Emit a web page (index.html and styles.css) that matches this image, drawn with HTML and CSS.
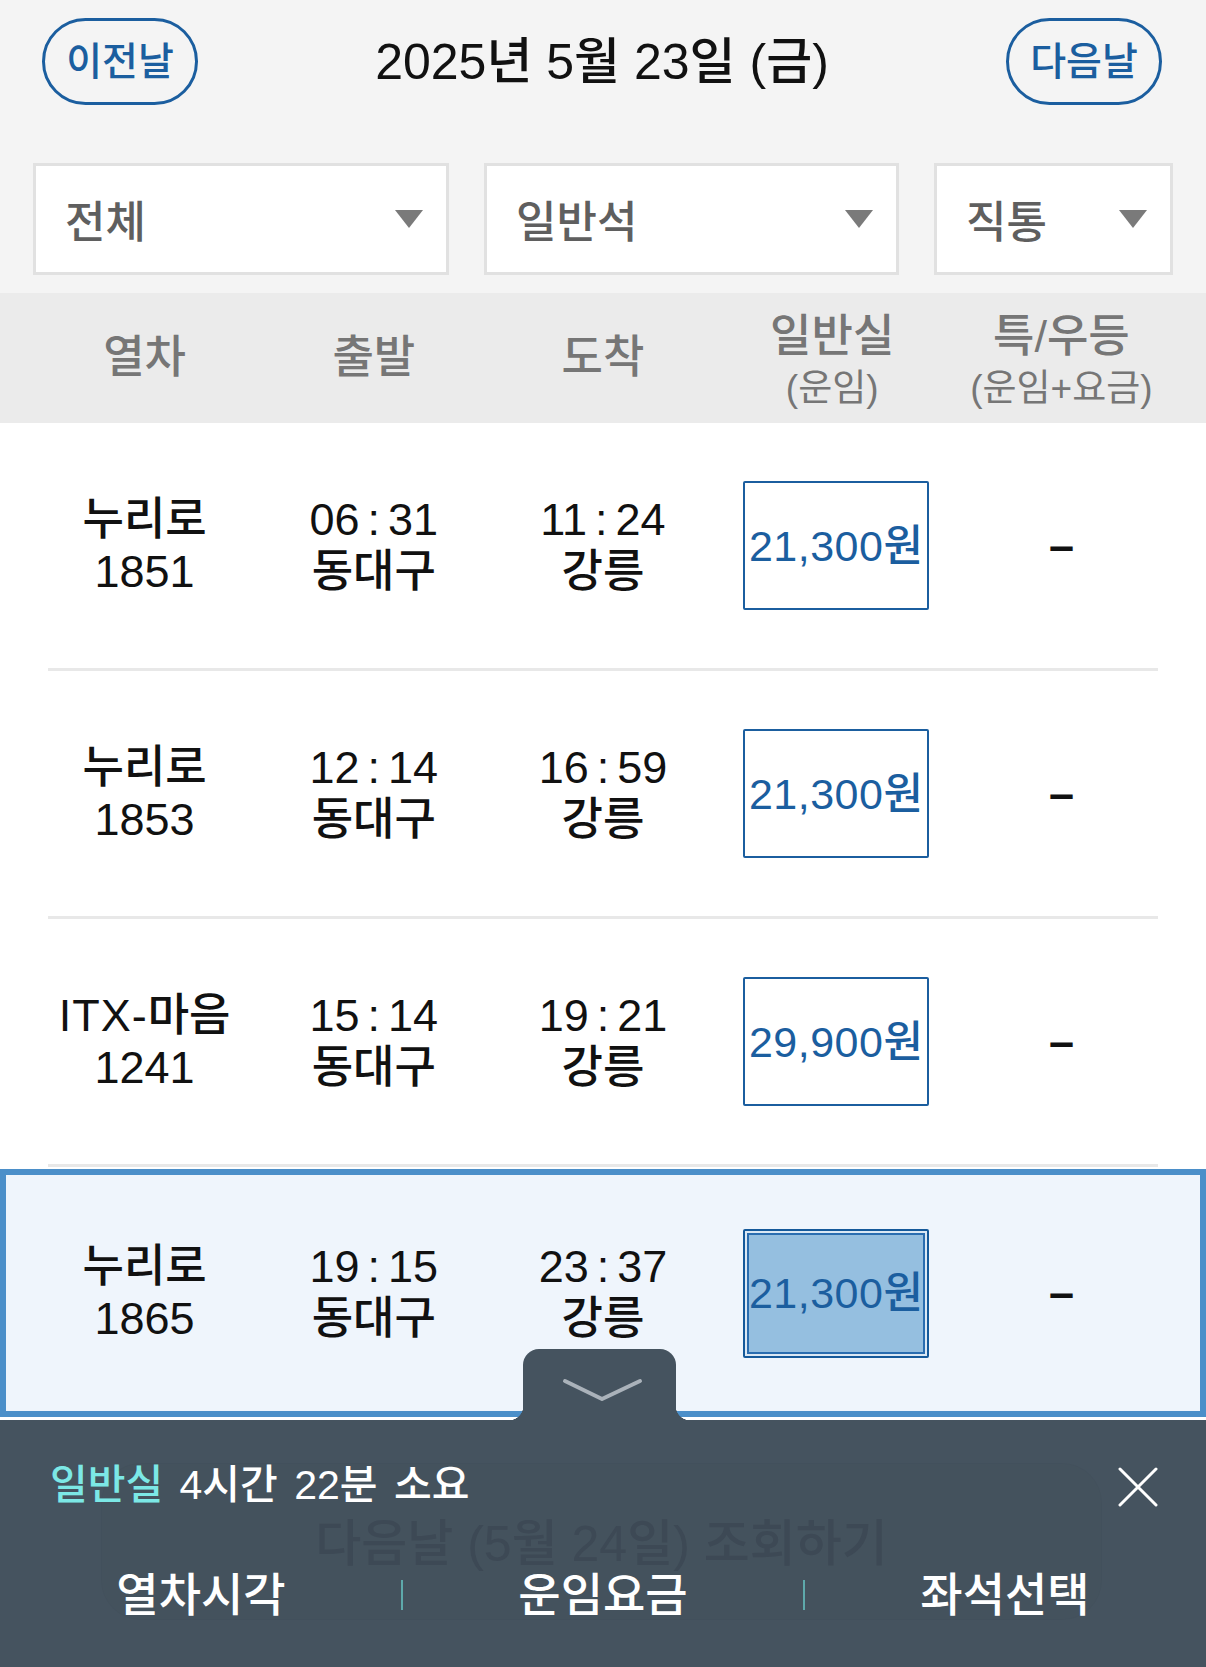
FILE: index.html
```html
<!DOCTYPE html>
<html lang="ko">
<head>
<meta charset="utf-8">
<title>열차 조회</title>
<link rel="stylesheet" href="styles.css">
</head>
<body>
<div class="page">
  <header class="datebar">
    <button class="daybtn">이전날</button>
    <h1 class="date">2025년 5월 23일 (금)</h1>
    <button class="daybtn">다음날</button>
  </header>

  <div class="filters">
    <div class="select"><span>전체</span><i class="caret"></i></div>
    <div class="select"><span>일반석</span><i class="caret"></i></div>
    <div class="select"><span>직통</span><i class="caret"></i></div>
  </div>

  <div class="thead">
    <div class="th">열차</div>
    <div class="th">출발</div>
    <div class="th">도착</div>
    <div class="th two"><span class="main">일반실</span><span class="sub">(운임)</span></div>
    <div class="th two"><span class="main">특/우등</span><span class="sub">(운임+요금)</span></div>
  </div>

  <div class="list">
    <div class="row">
      <div class="cell">누리로<br>1851</div>
      <div class="cell">06<span class="colon">:</span>31<br>동대구</div>
      <div class="cell">11<span class="colon">:</span>24<br>강릉</div>
      <div class="cell"><span class="price">21,300원</span></div>
      <div class="cell"><span class="dash">–</span></div>
    </div>
    <div class="sep"></div>
    <div class="row">
      <div class="cell">누리로<br>1853</div>
      <div class="cell">12<span class="colon">:</span>14<br>동대구</div>
      <div class="cell">16<span class="colon">:</span>59<br>강릉</div>
      <div class="cell"><span class="price">21,300원</span></div>
      <div class="cell"><span class="dash">–</span></div>
    </div>
    <div class="sep"></div>
    <div class="row">
      <div class="cell"><span class="itx">ITX-</span>마음<br>1241</div>
      <div class="cell">15<span class="colon">:</span>14<br>동대구</div>
      <div class="cell">19<span class="colon">:</span>21<br>강릉</div>
      <div class="cell"><span class="price">29,900원</span></div>
      <div class="cell"><span class="dash">–</span></div>
    </div>
    <div class="sep"></div>
    <div class="row selected">
      <div class="cell">누리로<br>1865</div>
      <div class="cell">19<span class="colon">:</span>15<br>동대구</div>
      <div class="cell">23<span class="colon">:</span>37<br>강릉</div>
      <div class="cell"><span class="price active">21,300원</span></div>
      <div class="cell"><span class="dash">–</span></div>
    </div>
  </div>
</div>

<div class="panel">
  <div class="handle">
    <svg class="chev" width="153" height="71" viewBox="0 0 153 71"><polyline points="42,32 79,50 117,32" fill="none" stroke="#aab2ba" stroke-width="4" stroke-linecap="round" stroke-linejoin="round"/></svg>
  </div>
  <div class="ghost"><span class="ghost-text">다음날 (5월 24일) 조회하기</span></div>
  <div class="info">
    <p class="duration"><span class="cls">일반실</span> 4시간 22분 소요</p>
    <svg class="close" width="40" height="40" viewBox="0 0 40 40"><path d="M2 2 L38 38 M38 2 L2 38" stroke="#ffffff" stroke-width="3" stroke-linecap="round"/></svg>
  </div>
  <nav class="tabs">
    <div class="tab">열차시각</div>
    <div class="tab">운임요금</div>
    <div class="tab">좌석선택</div>
  </nav>
</div>
</body>
</html>
```

FILE: styles.css
```css
* { box-sizing: border-box; }
html, body { margin: 0; padding: 0; }
body {
  background: #f4f4f4;
  font-family: "Liberation Sans", "Noto Sans CJK KR", sans-serif;
  font-weight: 500;
  color: #111;
}
.page { width: 1206px; }

.datebar {
  display: flex;
  align-items: center;
  justify-content: space-between;
  padding: 18px 44px 0 42px;
}
.daybtn {
  width: 156px;
  height: 87px;
  border: 3px solid #1b5e9f;
  border-radius: 44px;
  background: transparent;
  color: #1b5e9f;
  font-family: "Liberation Sans", "Noto Sans CJK KR", sans-serif;
  font-weight: 500;
  font-size: 39px;
  padding: 0;
  line-height: 1;
}
.date {
  margin: 0;
  font-size: 50px;
  font-weight: 500;
  color: #111;
  line-height: 60px;
}

.filters {
  display: grid;
  grid-template-columns: 416fr 415fr 239fr;
  gap: 35px;
  padding: 0 33px;
  margin-top: 58px;
}
.select {
  height: 112px;
  border: 3px solid #e1e1e1;
  background: #fff;
  display: flex;
  align-items: center;
  justify-content: space-between;
  padding: 0 23px 0 29px;
  font-size: 44px;
  color: #5f5f5f;
}
.caret {
  width: 0;
  height: 0;
  border-left: 14.5px solid transparent;
  border-right: 14.5px solid transparent;
  border-top: 18px solid #7a7a7a;
}

.thead {
  margin-top: 18px;
  height: 130px;
  background: #ebebeb;
  display: grid;
  grid-template-columns: repeat(5, 1fr);
  padding: 0 30px;
  align-items: center;
  color: #767676;
  text-align: center;
}
.th { font-size: 45px; line-height: 50px; }
.th.two { padding-top: 10px; }
.th .main { display: block; font-size: 45px; line-height: 46px; }
.th .sub { display: block; font-size: 37px; line-height: 46px; margin-top: 6px; font-weight: 400; }

.list {
  background: #fff;
  padding-bottom: 3px;
}
.row {
  height: 245px;
  display: grid;
  grid-template-columns: repeat(5, 1fr);
  padding: 0 30px;
  align-items: center;
}
.sep {
  height: 3px;
  margin: 0 48px;
  background: #e8e8e8;
}
.row.selected {
  margin-top: 2px;
  height: 248px;
  border: 6px solid #4b8fc9;
  background: #eff5fc;
  padding: 0 24px;
}
.cell {
  text-align: center;
  font-size: 45px;
  line-height: 52px;
  color: #111;
}
.colon { margin: 0 8px; }
.itx { letter-spacing: 1px; }
.dash { font-weight: bold; }
.price {
  display: inline-flex;
  align-items: center;
  justify-content: center;
  width: 186px;
  height: 129px;
  margin-left: 8px;
  border: 2px solid #1b5e9f;
  border-radius: 2px;
  color: #1b5e9f;
  font-size: 43px;
  letter-spacing: 0.5px;
  white-space: nowrap;
  background: #fff;
}
.price.active {
  background: #95bfe0;
  border-color: #15599a;
  box-shadow: inset 0 0 0 2px #dbe8f4, inset 0 0 0 4px #2a6db0;
}

.panel {
  position: fixed;
  left: 0;
  right: 0;
  bottom: 0;
  height: 247px;
  background: #45535f;
  padding-top: 41px;
}
.handle {
  position: absolute;
  left: 523px;
  top: -71px;
  width: 153px;
  height: 71px;
  background: #45535f;
  border-radius: 16px 16px 0 0;
}
.handle::before,
.handle::after {
  content: "";
  position: absolute;
  bottom: 0;
  width: 14px;
  height: 14px;
}
.handle::before {
  left: -14px;
  background: radial-gradient(circle at 0 0, transparent 14px, #45535f 14.5px);
}
.handle::after {
  right: -14px;
  background: radial-gradient(circle at 100% 0, transparent 14px, #45535f 14.5px);
}
.chev { display: block; }

.ghost {
  position: absolute;
  left: 101px;
  top: 43px;
  width: 1001px;
  height: 157px;
  border-radius: 40px;
  background: rgba(0, 0, 0, 0.012);
  border: 1px solid rgba(0, 0, 0, 0.025);
  display: flex;
  align-items: center;
  justify-content: center;
  padding-top: 5px;
}
.ghost-text {
  font-size: 50px;
  line-height: 44px;
  color: #3d4955;
}

.info {
  position: relative;
  display: flex;
  align-items: center;
  justify-content: space-between;
  padding: 0 48px 0 50px;
  height: 48px;
}
.duration {
  margin: 0;
  font-size: 41px;
  line-height: 48px;
  word-spacing: 5px;
  color: #fff;
}
.cls { color: #7ce8e6; }
.close { display: block; margin-top: 4px; }

.tabs {
  position: relative;
  display: grid;
  grid-template-columns: repeat(3, 1fr);
  margin-top: 61px;
}
.tab {
  position: relative;
  text-align: center;
  font-size: 46px;
  line-height: 50px;
  color: #fff;
}
.tab + .tab::before {
  content: "";
  position: absolute;
  left: -1px;
  top: 10px;
  width: 2px;
  height: 30px;
  background: #5ea9ab;
}
```
